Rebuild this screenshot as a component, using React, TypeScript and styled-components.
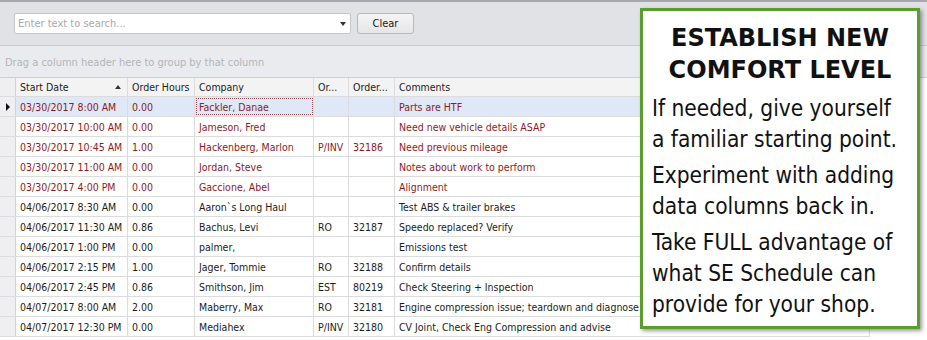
import React from "react";
import styled, { createGlobalStyle } from "styled-components";

const GlobalStyle = createGlobalStyle`
  body {
    margin: 0;
    background: #ffffff;
    overflow: hidden;
  }
`;

const FONT = `"DejaVu Sans Condensed", "DejaVu Sans", Verdana, sans-serif`;

const Page = styled.div`
  position: relative;
  width: 927px;
  height: 340px;
  overflow: hidden;
  font-family: ${FONT};
  font-stretch: condensed;
  border-top: 2px solid #a7a8ae;
  box-sizing: border-box;
`;

const Toolbar = styled.div`
  height: 44px;
  box-sizing: border-box;
  padding: 11px 14px 0;
  display: flex;
  gap: 6px;
  background: #e1e2e6;
  border-bottom: 1px solid #c9cacd;
`;

const SearchBox = styled.div`
  width: 337px;
  height: 21px;
  box-sizing: border-box;
  display: flex;
  align-items: center;
  justify-content: space-between;
  padding: 0 4px 0 3px;
  background: #ffffff;
  border: 1px solid #c6c7cb;
  border-radius: 2px;
  font-size: 11px;
  color: #a8a8ac;
`;

const DropArrow = styled.span`
  width: 0;
  height: 0;
  border-left: 3px solid transparent;
  border-right: 3px solid transparent;
  border-top: 4px solid #333333;
`;

const ClearButton = styled.button`
  width: 57px;
  height: 21px;
  padding: 0;
  font-family: ${FONT};
  font-stretch: condensed;
  font-size: 11px;
  color: #1a1a1a;
  background: linear-gradient(#f4f4f5, #e6e6e8);
  border: 1px solid #b7b8bc;
  border-radius: 3px;
`;

const GroupPanel = styled.div`
  height: 32px;
  box-sizing: border-box;
  padding: 10px 5px 0;
  background: #eaebee;
  border-bottom: 1px solid #cfd0d3;
  font-size: 11px;
  color: #b4b5b9;
`;

const Grid = styled.div`
  width: 870px;
  display: flex;
  flex-direction: column;
`;

const Row = styled.div<{ $header?: boolean; $selected?: boolean; $warn?: boolean }>`
  display: grid;
  grid-template-columns: 16px 112px 67px 119px 35px 46px 1fr;
  height: ${(p) => (p.$header ? "19px" : "20px")};
  background: ${(p) => (p.$header ? "#f3f3f4" : p.$selected ? "#dfe8f7" : "#ffffff")};
  color: ${(p) => (p.$header ? "#1c1c1c" : p.$warn ? "#8e1a1f" : "#1c1c1c")};
  font-size: 10.5px;
  border-bottom: 1px solid #dcdcde;
  box-sizing: border-box;
`;

const Cell = styled.div<{ $focus?: boolean }>`
  display: flex;
  align-items: center;
  justify-content: space-between;
  padding: 0 4px;
  white-space: nowrap;
  overflow: hidden;
  border-right: 1px solid #dcdcde;
  box-sizing: border-box;
  outline: ${(p) => (p.$focus ? "1px dotted #9a4a52" : "none")};
  outline-offset: -2px;
`;

const Indicator = styled.div`
  display: flex;
  align-items: center;
  justify-content: center;
  background: #efeff1;
  border-right: 1px solid #d2d2d5;
`;

const RowArrow = styled.span`
  width: 0;
  height: 0;
  border-top: 4px solid transparent;
  border-bottom: 4px solid transparent;
  border-left: 4px solid #111111;
`;

const SortArrow = styled.span`
  width: 0;
  height: 0;
  border-left: 3px solid transparent;
  border-right: 3px solid transparent;
  border-bottom: 4px solid #333333;
  margin-right: 2px;
`;

const Callout = styled.div`
  position: absolute;
  left: 640px;
  top: 6px;
  width: 280px;
  height: 321px;
  box-sizing: border-box;
  padding: 11px 0 0 9px;
  background: #ffffff;
  border: 3px solid #5c9e2d;
  box-shadow: 2px 2px 4px rgba(0, 0, 0, 0.4);
  font-family: ${FONT};
  font-stretch: condensed;
  color: #111111;
`;

const Title = styled.h1`
  margin: 0 9px 7px 0;
  font-family: "DejaVu Sans", Verdana, sans-serif;
  font-size: 24px;
  font-stretch: normal;
  line-height: 32px;
  font-weight: bold;
  text-align: center;
  white-space: nowrap;
`;

const Para = styled.p`
  margin: 0 0 5px;
  font-size: 22.5px;
  line-height: 31px;
  white-space: nowrap;
`;

type Job = [string, string, string, string, string, string, boolean];

const jobs: Job[] = [
  ["03/30/2017 8:00 AM", "0.00", "Fackler, Danae", "", "", "Parts are HTF", true],
  ["03/30/2017 10:00 AM", "0.00", "Jameson, Fred", "", "", "Need new vehicle details ASAP", true],
  ["03/30/2017 10:45 AM", "1.00", "Hackenberg, Marlon", "P/INV", "32186", "Need previous mileage", true],
  ["03/30/2017 11:00 AM", "0.00", "Jordan, Steve", "", "", "Notes about work to perform", true],
  ["03/30/2017 4:00 PM", "0.00", "Gaccione, Abel", "", "", "Alignment", true],
  ["04/06/2017 8:30 AM", "0.00", "Aaron`s Long Haul", "", "", "Test ABS & trailer brakes", false],
  ["04/06/2017 11:30 AM", "0.86", "Bachus, Levi", "RO", "32187", "Speedo replaced? Verify", false],
  ["04/06/2017 1:00 PM", "0.00", "palmer,", "", "", "Emissions test", false],
  ["04/06/2017 2:15 PM", "1.00", "Jager, Tommie", "RO", "32188", "Confirm details", false],
  ["04/06/2017 2:45 PM", "0.86", "Smithson, Jim", "EST", "80219", "Check Steering + Inspection", false],
  ["04/07/2017 8:00 AM", "2.00", "Maberry, Max", "RO", "32181", "Engine compression issue; teardown and diagnose", false],
  ["04/07/2017 12:30 PM", "0.00", "Mediahex", "P/INV", "32180", "CV Joint, Check Eng Compression and advise", false],
];

const App = () => {
  return (
    <Page>
      <GlobalStyle />
      <Toolbar>
        <SearchBox>
          Enter text to search...
          <DropArrow />
        </SearchBox>
        <ClearButton>Clear</ClearButton>
      </Toolbar>
      <GroupPanel>Drag a column header here to group by that column</GroupPanel>
      <Grid>
        <Row $header>
          <Indicator />
          <Cell>
            Start Date
            <SortArrow />
          </Cell>
          <Cell>Order Hours</Cell>
          <Cell>Company</Cell>
          <Cell>Or...</Cell>
          <Cell>Order...</Cell>
          <Cell>Comments</Cell>
        </Row>
        {jobs.map((job, index) => (
          <Row key={index} $selected={index === 0} $warn={job[6]}>
            <Indicator>{index === 0 && <RowArrow />}</Indicator>
            <Cell>{job[0]}</Cell>
            <Cell>{job[1]}</Cell>
            <Cell $focus={index === 0}>{job[2]}</Cell>
            <Cell>{job[3]}</Cell>
            <Cell>{job[4]}</Cell>
            <Cell>{job[5]}</Cell>
          </Row>
        ))}
      </Grid>
      <Callout>
        <Title>
          ESTABLISH NEW
          <br />
          COMFORT LEVEL
        </Title>
        <Para>
          If needed, give yourself
          <br />a familiar starting point.
        </Para>
        <Para>
          Experiment with adding
          <br />
          data columns back in.
        </Para>
        <Para>
          Take FULL advantage of
          <br />
          what SE Schedule can
          <br />
          provide for your shop.
        </Para>
      </Callout>
    </Page>
  );
};

export default App;
